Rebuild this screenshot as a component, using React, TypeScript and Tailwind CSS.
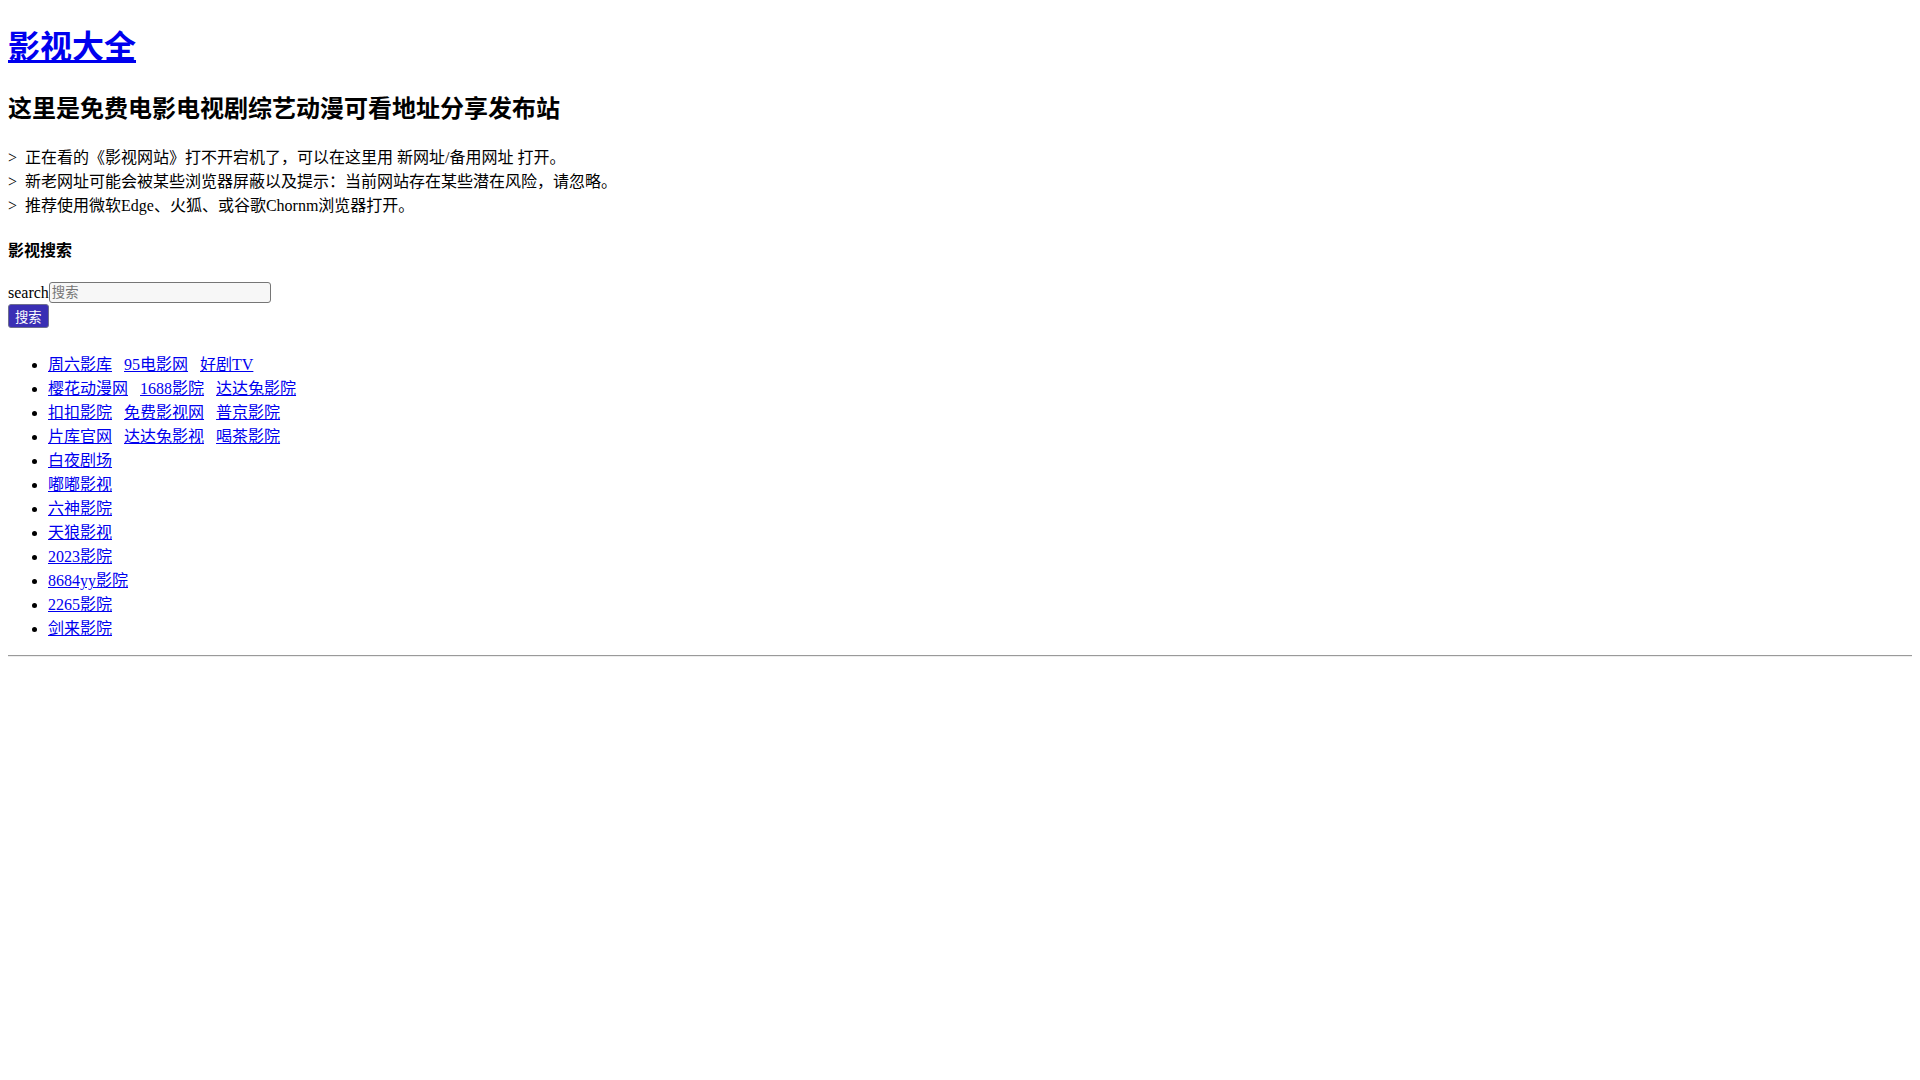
import React from "react";

const rows: string[][] = [
  ["周六影库", "95电影网", "好剧TV"],
  ["樱花动漫网", "1688影院", "达达兔影院"],
  ["扣扣影院", "免费影视网", "普京影院"],
  ["片库官网", "达达兔影视", "喝茶影院"],
  ["白夜剧场"],
  ["嘟嘟影视"],
  ["六神影院"],
  ["天狼影视"],
  ["2023影院"],
  ["8684yy影院"],
  ["2265影院"],
  ["剑来影院"],
];

const notes = [
  "正在看的《影视网站》打不开宕机了，可以在这里用 新网址/备用网址 打开。",
  "新老网址可能会被某些浏览器屏蔽以及提示：当前网站存在某些潜在风险，请忽略。",
  "推荐使用微软Edge、火狐、或谷歌Chornm浏览器打开。",
];

export default function App() {
  return (
    <div className="min-h-screen bg-white px-2 pb-2 text-[16px] leading-[normal] text-black font-['Liberation_Serif','Noto_Sans_CJK_SC',serif]">
      {/* header */}
      <h1 className="my-[21.44px] text-[32px] font-bold">
        <a href="#" className="text-[#0000ee] underline">
          影视大全
        </a>
      </h1>
      <h2 className="my-[19.92px] text-[24px] font-bold">这里是免费电影电视剧综艺动漫可看地址分享发布站</h2>

      <p className="my-4">
        {notes.map((n, i) => (
          <span key={i} className="block">
            {">\u00a0 "}
            {n}
          </span>
        ))}
      </p>

      <h4 className="my-[21.28px] text-[16px] font-bold">影视搜索</h4>

      {/* search form */}
      <form onSubmit={(e) => e.preventDefault()}>
        <div className="flex h-[21px] items-center">
          <label htmlFor="q">search</label>
          <input
            id="q"
            type="text"
            placeholder="搜索"
            className="h-[21px] w-[222px] rounded-[3px] border border-[#767676] bg-[#f7f7f7] px-[2px] text-[13.33px] placeholder:text-[#757575] outline-none"
          />
        </div>
        <button
          type="submit"
          className="mt-[1px] h-[24px] rounded-[3px] border border-[#6f6f8f] bg-[#3a2fb4] px-[6px] text-[13.33px] text-white"
        >
          搜索
        </button>
      </form>

      {/* site list */}
      <ul className="mt-[23px] mb-4 list-disc pl-10">
        {rows.map((r, i) => (
          <li key={i}>
            {r.map((name, j) => (
              <a
                key={j}
                href="#"
                className={`text-[#0000ee] underline ${j < r.length - 1 ? "mr-[12px]" : ""}`}
              >
                {name}
              </a>
            ))}
          </li>
        ))}
      </ul>

      <hr className="my-2 border-t border-b border-t-[#9a9a9a] border-b-[#eeeeee]" />
    </div>
  );
}
